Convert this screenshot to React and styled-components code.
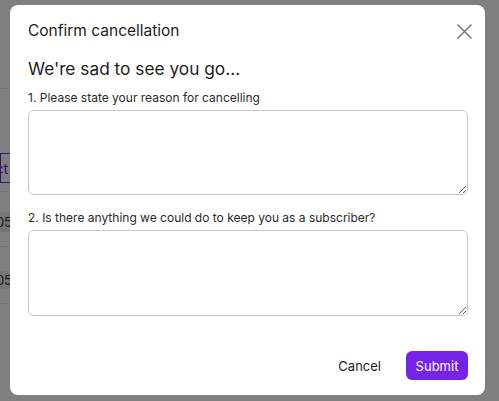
import React from "react";
import styled, { createGlobalStyle } from "styled-components";

const Global = createGlobalStyle`
  html, body { margin: 0; padding: 0; }
  body {
    width: 499px;
    height: 401px;
    overflow: hidden;
    font-family: Inter, "Noto Sans", Arial, sans-serif;
    background: #ffffff;
  }
`;

const Page = styled.div`
  width: 499px;
  height: 401px;
  background: #fff;
  display: flex;
  flex-direction: column;
`;

const SideStrip = styled.div`
  width: 12px;
  overflow: hidden;
  display: flex;
  flex-direction: column;
  padding-top: 88px;
`;

const Divider = styled.div`
  height: 1px;
  background: #e6e6e6;
  flex-shrink: 0;
`;

const Spacer = styled.div`
  height: ${(p) => p.$h}px;
  flex-shrink: 0;
`;

const GhostButton = styled.div`
  height: 30px;
  box-sizing: border-box;
  border: 1px solid #6d28d9;
  border-right: none;
  display: flex;
  justify-content: flex-end;
  align-items: center;
  font-size: 14px;
  color: #5b21b6;
  white-space: nowrap;
  padding-right: 4px;
  flex-shrink: 0;
`;

const Row = styled.div`
  height: ${(p) => p.$h}px;
  display: flex;
  justify-content: flex-end;
  align-items: center;
  font-size: 13px;
  color: #333;
  white-space: nowrap;
  background: ${(p) => (p.$shade ? "#ececec" : "transparent")};
  flex-shrink: 0;
`;

const Overlay = styled.div`
  position: fixed;
  inset: 0;
  background: rgba(0, 0, 0, 0.5);
  display: flex;
  align-items: flex-start;
  padding: 5px 14px 6px 10px;
`;

const Modal = styled.div`
  width: 475px;
  height: 390px;
  box-sizing: border-box;
  background: #fff;
  border-radius: 8px;
  padding: 14px 17px 15px 18px;
  display: flex;
  flex-direction: column;
`;

const Header = styled.div`
  display: flex;
  justify-content: space-between;
  align-items: center;
  height: 24px;
`;

const Title = styled.h2`
  margin: 0;
  font-size: 15.5px;
  font-weight: 400;
  color: #1c1c1c;
  line-height: 24px;
`;

const CloseButton = styled.button`
  border: none;
  background: none;
  padding: 0;
  width: 18px;
  height: 18px;
  display: flex;
  align-items: center;
  justify-content: center;
  cursor: pointer;
  margin-right: -5px;
`;

const Heading = styled.h3`
  margin: 12px 0 0;
  font-size: 17.3px;
  font-weight: 400;
  color: #1c1c1c;
  line-height: 28px;
`;

const Label = styled.label`
  display: block;
  margin-top: ${(p) => p.$mt}px;
  font-size: 12px;
  line-height: 18px;
  color: #2a2a2a;
`;

const TextArea = styled.textarea`
  display: block;
  margin-top: 3px;
  width: 100%;
  height: ${(p) => p.$h}px;
  box-sizing: border-box;
  border: 1px solid #c6c5cd;
  border-radius: 6px;
  font-family: inherit;
  font-size: 13px;
  padding: 8px 10px;
  resize: vertical;
  outline: none;
`;

const Footer = styled.div`
  margin-top: auto;
  display: flex;
  justify-content: flex-end;
  align-items: center;
  gap: 13px;
`;

const TextButton = styled.button`
  border: none;
  background: none;
  font-family: inherit;
  font-size: 13px;
  color: #1c1c1c;
  height: 29px;
  padding: 0 12px;
  cursor: pointer;
`;

const PrimaryButton = styled.button`
  border: none;
  background: #7523e6;
  color: #fff;
  font-family: inherit;
  font-size: 13px;
  height: 29px;
  width: 62px;
  border-radius: 6px;
  cursor: pointer;
`;

export default function App() {
  return (
    <>
      <Global />
      <Page>
        <SideStrip>
          <Divider />
          <Spacer $h={64} />
          <GhostButton>Select</GhostButton>
          <Spacer $h={8} />
          <Divider />
          <Spacer $h={20} />
          <Row $h={20} $shade>10/05</Row>
          <Spacer $h={14} />
          <Divider />
          <Spacer $h={24} />
          <Row $h={18} $shade>10/05</Row>
          <Spacer $h={14} />
          <Divider />
        </SideStrip>
      </Page>
      <Overlay>
        <Modal role="dialog">
          <Header>
            <Title>Confirm cancellation</Title>
            <CloseButton aria-label="Close">
              <svg width="15" height="15" viewBox="0 0 15 15">
                <path
                  d="M0.5 0.5 L14.5 14.5 M14.5 0.5 L0.5 14.5"
                  stroke="#6e6e6e"
                  strokeWidth="1.4"
                  fill="none"
                />
              </svg>
            </CloseButton>
          </Header>
          <Heading>We're sad to see you go...</Heading>
          <Label $mt={6}>1. Please state your reason for cancelling</Label>
          <TextArea $h={85} />
          <Label $mt={14}>2. Is there anything we could do to keep you as a subscriber?</Label>
          <TextArea $h={86} />
          <Footer>
            <TextButton>Cancel</TextButton>
            <PrimaryButton>Submit</PrimaryButton>
          </Footer>
        </Modal>
      </Overlay>
    </>
  );
}
